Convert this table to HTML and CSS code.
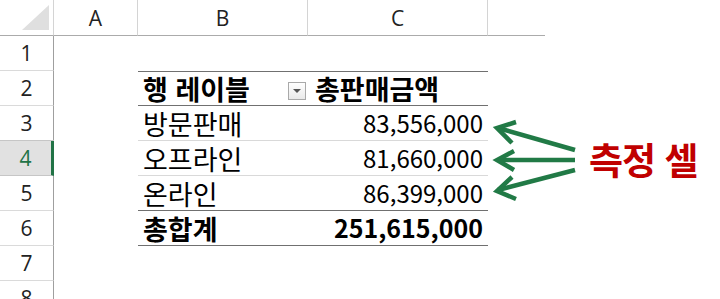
FILE: index.html
```html
<!DOCTYPE html>
<html lang="ko">
<head>
<meta charset="utf-8">
<title>피벗 테이블</title>
<link rel="stylesheet" href="styles.css">
</head>
<body>
<div class="sheet">
  <div class="colhead">
    <div class="corner"><span class="tri"></span></div>
    <div class="ch col-a">A</div>
    <div class="ch col-b">B</div>
    <div class="ch col-c">C</div>
    <div class="ch col-d"></div>
  </div>
  <div class="grid">
    <div class="rowhead">
      <div class="rh">1</div>
      <div class="rh">2</div>
      <div class="rh">3</div>
      <div class="rh active">4</div>
      <div class="rh">5</div>
      <div class="rh">6</div>
      <div class="rh">7</div>
      <div class="rh">8</div>
    </div>
    <div class="cells">
      <div class="spacer"></div>
      <div class="pivot">
        <div class="prow phead">
          <div class="plabel bold"><span>행 레이블</span><span class="dd"><span class="ddtri"></span></span></div>
          <div class="pvalue bold left">총판매금액</div>
        </div>
        <div class="prow">
          <div class="plabel">방문판매</div>
          <div class="pvalue">83,556,000</div>
        </div>
        <div class="prow">
          <div class="plabel">오프라인</div>
          <div class="pvalue">81,660,000</div>
        </div>
        <div class="prow plast">
          <div class="plabel">온라인</div>
          <div class="pvalue">86,399,000</div>
        </div>
        <div class="prow ptotal">
          <div class="plabel bold">총합계</div>
          <div class="pvalue bold">251,615,000</div>
        </div>
      </div>
    </div>
  </div>
  <svg class="arrows" width="100" height="90" viewBox="485 115 100 90" aria-hidden="true">
    <g fill="none" stroke="#217a46" stroke-width="4.5" stroke-linejoin="miter">
      <path d="M575 150 L498 128"/>
      <path d="M516 122 L497 128 L512 143"/>
      <path d="M575 160 L498 160"/>
      <path d="M514 151 L497 160 L514 170"/>
      <path d="M575 170 L498 190"/>
      <path d="M512 177 L497 191 L516 199"/>
    </g>
  </svg>
  <div class="label">측정 셀</div>
</div>
</body>
</html>
```
FILE: styles.css
```css
html, body {
  margin: 0;
  padding: 0;
  background: #fff;
}
body {
  width: 720px;
  height: 299px;
  overflow: hidden;
  font-family: "Noto Sans CJK KR", "Noto Sans", sans-serif;
  color: #000;
}
.sheet {
  position: relative;
  width: 720px;
  height: 299px;
  overflow: hidden;
}
.colhead {
  display: flex;
  height: 36px;
}
.corner {
  width: 54px;
  box-sizing: border-box;
  border-right: 1px solid #d4d4d4;
  border-bottom: 1px solid #ababab;
  display: flex;
  justify-content: flex-end;
  align-items: flex-end;
  padding: 0 4px 5px 0;
}
.tri {
  width: 27px;
  height: 25px;
  background: #dfdfdf;
  clip-path: polygon(100% 0, 100% 100%, 0 100%);
}
.ch {
  box-sizing: border-box;
  border-right: 1px solid #d4d4d4;
  border-bottom: 1px solid #ababab;
  display: flex;
  align-items: center;
  justify-content: center;
  font-family: "Open Sans", "Noto Sans", sans-serif;
  font-size: 21px;
  color: #222;
}
.col-a { width: 84px; }
.col-b { width: 170px; }
.col-c { width: 180px; }
.col-d { width: 57px; border-right: none; }

.grid {
  display: flex;
}
.rowhead {
  width: 54px;
  display: flex;
  flex-direction: column;
}
.rh {
  height: 35px;
  flex: none;
  box-sizing: border-box;
  border-right: 1px solid #9f9f9f;
  border-bottom: 1px solid #dadada;
  display: flex;
  align-items: center;
  justify-content: center;
  font-family: "Open Sans", "Noto Sans", sans-serif;
  font-size: 21px;
  color: #222;
}
.rh.active {
  background: #e1e1e1;
  color: #217346;
  border-right: 3px solid #217346;
  border-bottom-color: #c6c6c6;
  box-shadow: 0 -1px 0 #c6c6c6;
}
.cells {
  padding-left: 84px;
  display: flex;
  flex-direction: column;
}
.spacer {
  height: 35px;
}
.pivot {
  width: 350px;
  display: flex;
  flex-direction: column;
}
.prow {
  height: 35px;
  box-sizing: border-box;
  display: flex;
  border-bottom: 1px solid #d9d9d9;
  line-height: 33px;
}
.prow.phead {
  border-top: 1px solid #707070;
  border-bottom-color: #707070;
}
.prow.plast {
  border-bottom-color: #707070;
}
.prow.ptotal {
  border-bottom-color: #707070;
}
.plabel {
  width: 170px;
  box-sizing: border-box;
  padding-left: 5px;
  padding-right: 2px;
  display: flex;
  align-items: center;
  justify-content: space-between;
  font-size: 27px;
}
.pvalue {
  width: 180px;
  box-sizing: border-box;
  text-align: right;
  padding-right: 5px;
  font-size: 24px;
}
.pvalue.bold {
  font-size: 25px;
}
.pvalue.left {
  text-align: left;
  padding-left: 7px;
  font-size: 27px;
}
.bold {
  font-weight: 700;
}
.dd {
  width: 18px;
  height: 18px;
  box-sizing: border-box;
  border: 1px solid #a9a9a9;
  background: linear-gradient(#ffffff, #e9e9e9);
  display: flex;
  align-items: center;
  justify-content: center;
  margin-top: 5px;
}
.ddtri {
  width: 0;
  height: 0;
  border-left: 4px solid transparent;
  border-right: 4px solid transparent;
  border-top: 4px solid #555;
}
.arrows {
  position: absolute;
  left: 485px;
  top: 115px;
}
.label {
  position: absolute;
  left: 589px;
  top: 134px;
  font-size: 37px;
  line-height: 50px;
  font-weight: 700;
  color: #c00000;
  letter-spacing: -1px;
}
```
